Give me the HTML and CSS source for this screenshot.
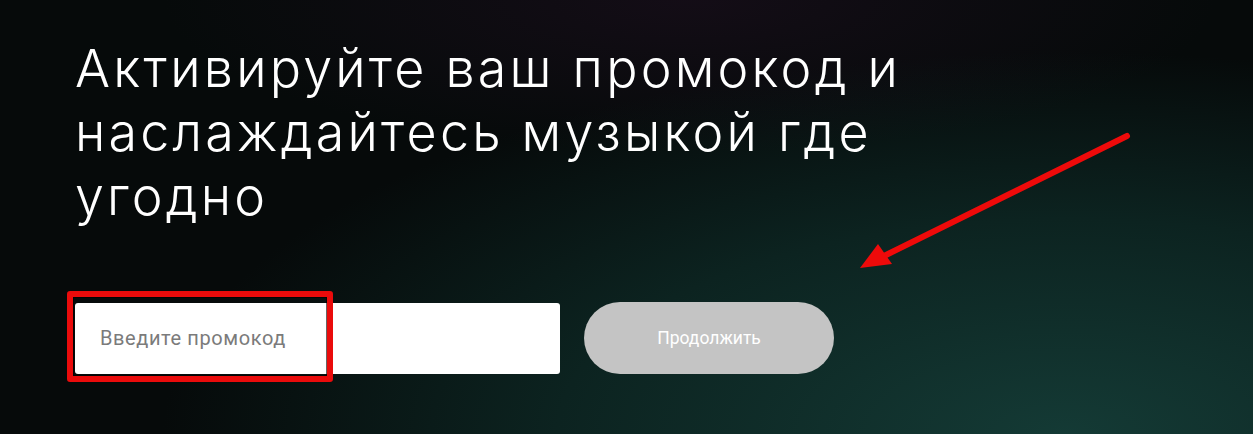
FILE: index.html
```html
<!DOCTYPE html>
<html lang="ru">
<head>
<meta charset="utf-8">
<link rel="stylesheet" href="styles.css">
</head>
<body>
<main class="page">
  <h1 class="title">Активируйте ваш промокод и наслаждайтесь музыкой где угодно</h1>
  <form class="promo">
    <div class="field">
      <input class="input" type="text" placeholder="Введите промокод">
      <span class="highlight"></span>
    </div>
    <button class="btn" type="button">Продолжить</button>
  </form>
  <svg class="arrow" width="1253" height="434" viewBox="0 0 1253 434">
    <line x1="1127" y1="136" x2="884" y2="256" stroke="#ee0a0a" stroke-width="6" stroke-linecap="round"/>
    <polygon points="860,268 878,244 892,264" fill="#ee0a0a"/>
  </svg>
</main>
</body>
</html>
```
FILE: styles.css
```css
html, body {
  margin: 0;
  height: 100%;
}
body {
  background:
    radial-gradient(ellipse 60% 50% at 55% 0%, rgba(45, 18, 45, 0.35), rgba(0,0,0,0) 70%),
    radial-gradient(ellipse 90% 110% at 85% 100%, #143a35 0%, #0c2320 45%, #060a0a 80%),
    #050505;
  overflow: hidden;
}
.page {
  position: relative;
  height: 434px;
  padding: 37px 0 0 75px;
  box-sizing: border-box;
  font-family: Inter, "Noto Sans", sans-serif;
}
.title {
  margin: 0;
  width: 900px;
  color: #ffffff;
  font-weight: 300;
  font-size: 52px;
  line-height: 64px;
  letter-spacing: 3.2px;
}
.promo {
  display: flex;
  align-items: center;
  gap: 24px;
  margin-top: 73px;
}
.field {
  position: relative;
  width: 485px;
  height: 71px;
}
.input {
  box-sizing: border-box;
  width: 100%;
  height: 100%;
  border: none;
  border-radius: 3px;
  background: #ffffff;
  padding: 0 0 0 25px;
  font-family: Roboto, sans-serif;
  font-size: 20px;
  letter-spacing: 0.6px;
  color: #333;
  outline: none;
}
.input::placeholder {
  color: #7b7b7b;
}
.highlight {
  position: absolute;
  left: -8px;
  top: -12px;
  width: 266px;
  height: 91px;
  box-sizing: border-box;
  border: 6px solid #ea0b0b;
  border-radius: 3px;
  box-shadow: inset 0 0 0 1px rgba(0,0,0,0.6);
  pointer-events: none;
}
.btn {
  width: 250px;
  height: 72px;
  border: none;
  border-radius: 36px;
  background: #c4c4c4;
  color: #ffffff;
  font-family: Roboto, sans-serif;
  font-size: 17.5px;
  cursor: pointer;
}
.arrow {
  position: absolute;
  left: 0;
  top: 0;
  pointer-events: none;
}
```
